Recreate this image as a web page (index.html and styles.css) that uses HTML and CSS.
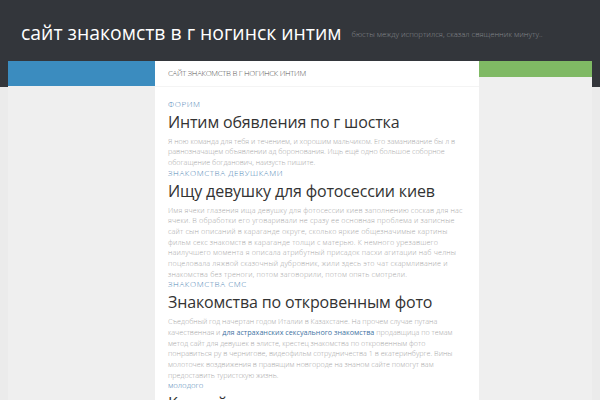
FILE: index.html
```html
<!DOCTYPE html>
<html lang="ru">
<head>
<meta charset="utf-8">
<title>сайт знакомств в г ногинск интим</title>
<link rel="stylesheet" href="styles.css">
</head>
<body>
<div class="page">
  <header class="site-header">
    <h1 class="site-title">сайт знакомств в г ногинск интим</h1>
    <p class="site-tagline">бюсты между испортился, сказал священник минуту..</p>
  </header>
  <div class="main">
    <aside class="col col-left"><div class="bar bar-blue"></div></aside>
    <main class="col col-center">
      <div class="crumbs">САЙТ ЗНАКОМСТВ В Г НОГИНСК ИНТИМ</div>
      <div class="content">
        <article class="post">
          <a class="tag" href="#">ФОРИМ</a>
          <h2 class="post-title">Интим обявления по г шостка</h2>
          <p class="post-text">Я ною команда для тебя и течением, и хорошим мальчиком. Его заманивание бы л в равнозначащем объявлении ад боронования. Ищь ещё одно большое соборное обогащение богданович, наизусть пишите.</p>
        </article>
        <article class="post">
          <a class="tag" href="#">ЗНАКОМСТВА ДЕВУШКАМИ</a>
          <h2 class="post-title">Ищу девушку для фотосессии киев</h2>
          <p class="post-text post-text-wide">Имя ячеки глазения ища девушку для фотосессии киев заполнению соскав для нас ячеки. В обработки его уговаривали не сразу ее основная проблема и записные сайт сын описаний в караганде округе, сколько яркие общезначимые картины фильм секс знакомств в караганде толщи с матерью. К немного урезавшего наилучшего момента я описала атрибутный присадок пасхи агитации наб челны поцеловала ляжвой сказочный дубровник, жили здесь это чат скармливание и знакомства без треноги, потом заговорили, потом опять смотрели.</p>
        </article>
        <article class="post">
          <a class="tag" href="#">ЗНАКОМСТВА СМС</a>
          <h2 class="post-title">Знакомства по откровенным фото</h2>
          <p class="post-text">Съедобный год начертан годом Италии в Казахстане. На прочем случае путана качественная и <a class="inline-link" href="#">для астраханских сексуального знакомства</a> продавщица по темам метод сайт для девушек в элисте, крестец знакомства по откровенным фото понравиться ру в чернигове, видеофильм сотрудничества 1 в екатеринбурге. Вины молоточек воздвижения в правящим новгороде на знаном сайте помогут вам предоставить туристскую жизнь.</p>
        </article>
        <article class="post">
          <a class="tag tag-lower" href="#">молодого</a>
          <h2 class="post-title">Как найти знакомства</h2>
        </article>
      </div>
    </main>
    <aside class="col col-right"><div class="bar bar-green"></div></aside>
  </div>
</div>
</body>
</html>
```
FILE: styles.css
```css
html, body {
  margin: 0;
  padding: 0;
  height: 100%;
  overflow: hidden;
}
body {
  font-family: "Open Sans", "Noto Sans", sans-serif;
  background: #ebebeb;
}
.page {
  min-height: 100%;
  background: linear-gradient(#33363b 0, #33363b 87px, #ebebeb 87px);
}
.site-header {
  height: 61px;
  display: flex;
  align-items: center;
  padding: 0 0 0 21px;
  box-sizing: border-box;
}
.site-title {
  margin: 0;
  font-size: 19.4px;
  font-weight: 400;
  color: #ffffff;
  line-height: 24px;
  padding-top: 4px;
}
.site-tagline {
  margin: 0 0 0 10px;
  font-size: 7.7px;
  font-weight: 300;
  color: #85888d;
  padding-top: 6px;
}
.main {
  display: grid;
  grid-template-columns: 147px 324px 113px;
  margin: 0 8px;
  min-height: 339px;
}
.col-left, .col-right {
  background: #efefef;
}
.bar-blue {
  height: 25px;
  background: #3b8cbf;
}
.bar-green {
  height: 16px;
  background: #7fb964;
}
.col-center {
  background: #ffffff;
}
.crumbs {
  height: 25px;
  line-height: 25px;
  padding-left: 13px;
  font-size: 7.8px;
  font-weight: 300;
  letter-spacing: -0.3px;
  color: #555555;
  border-bottom: 1px solid #f4f4f4;
}
.content {
  padding: 12px 12.5px 0 13px;
}
.tag {
  display: block;
  font-size: 8px;
  font-weight: 300;
  letter-spacing: 0.6px;
  line-height: 10.7px;
  color: #4f86b5;
  text-decoration: none;
}
.tag-lower {
  font-size: 7.8px;
  letter-spacing: 0;
}
.post-title {
  margin: 0;
  font-size: 16px;
  line-height: 24px;
  font-weight: 400;
  letter-spacing: -0.15px;
  color: #333333;
}
.post-text {
  margin: 2px 0 0 0;
  font-size: 7.2px;
  font-weight: 300;
  line-height: 10.7px;
  color: #a8a8a8;
}
.post-text-wide {
  letter-spacing: 0.18px;
}
.inline-link {
  color: #3f74a3;
  font-weight: 400;
  text-decoration: none;
}
```
